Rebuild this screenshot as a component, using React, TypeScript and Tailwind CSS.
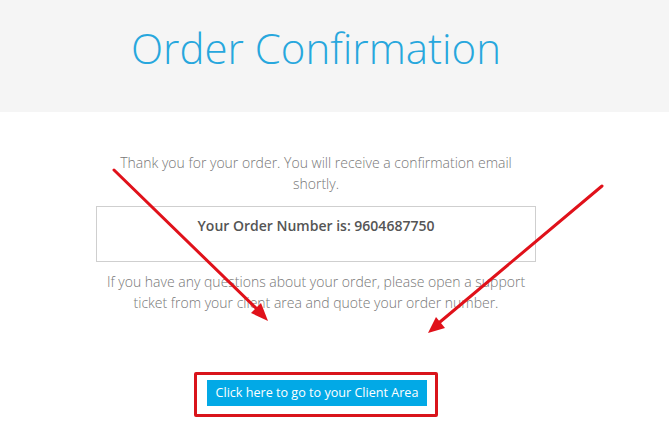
export default function App() {
  return (
    <div className="relative h-[435px] w-[669px] overflow-hidden bg-white font-['Open_Sans',sans-serif]">
      <header className="h-[112px] bg-[#f5f5f5] pl-[131px] pt-[18px]">
        <h1 className="text-[42px] font-light leading-[60px] text-[#27a7dd]">
          Order Confirmation
        </h1>
      </header>

      <main className="ml-[96px] flex w-[440px] flex-col items-center pt-[40px] text-center">
        <p className="px-[20px] text-[14px] font-light leading-[21px] text-[#777]">
          Thank you for your order. You will receive a confirmation email shortly.
        </p>
        <div className="mt-[12px] h-[56px] w-full border border-[#cfcfcf] pt-[9px]">
          <p className="text-[14px] font-semibold leading-[20px] text-[#555]">
            Your Order Number is: 9604687750
          </p>
        </div>
        <p className="mt-[9px] text-[14px] font-light leading-[21px] text-[#777]">
          If you have any questions about your order, please open a support ticket from your
          client area and quote your order number.
        </p>
        <div className="mt-[59px] rounded-[2px] border-[3px] border-[#d9141b] pb-[8px] pl-[10px] pr-[8px] pt-[5px]">
          <a
            href="#"
            className="block bg-[#02a9e6] px-[9px] text-[12.6px] leading-[26px] text-white"
          >
            Click here to go to your Client Area
          </a>
        </div>
      </main>

      <svg
        className="pointer-events-none absolute left-0 top-0"
        width="669"
        height="435"
        viewBox="0 0 669 435"
      >
        <g stroke="#e0111a" strokeWidth="3" strokeLinecap="round" fill="none">
          <line x1="114" y1="170" x2="262" y2="314" />
          <line x1="602" y1="186" x2="434" y2="327" />
        </g>
        <g fill="#e0111a">
          <polygon points="268,321 251,313 261,303" />
          <polygon points="428,333 436,317 445,328" />
        </g>
      </svg>
    </div>
  );
}
